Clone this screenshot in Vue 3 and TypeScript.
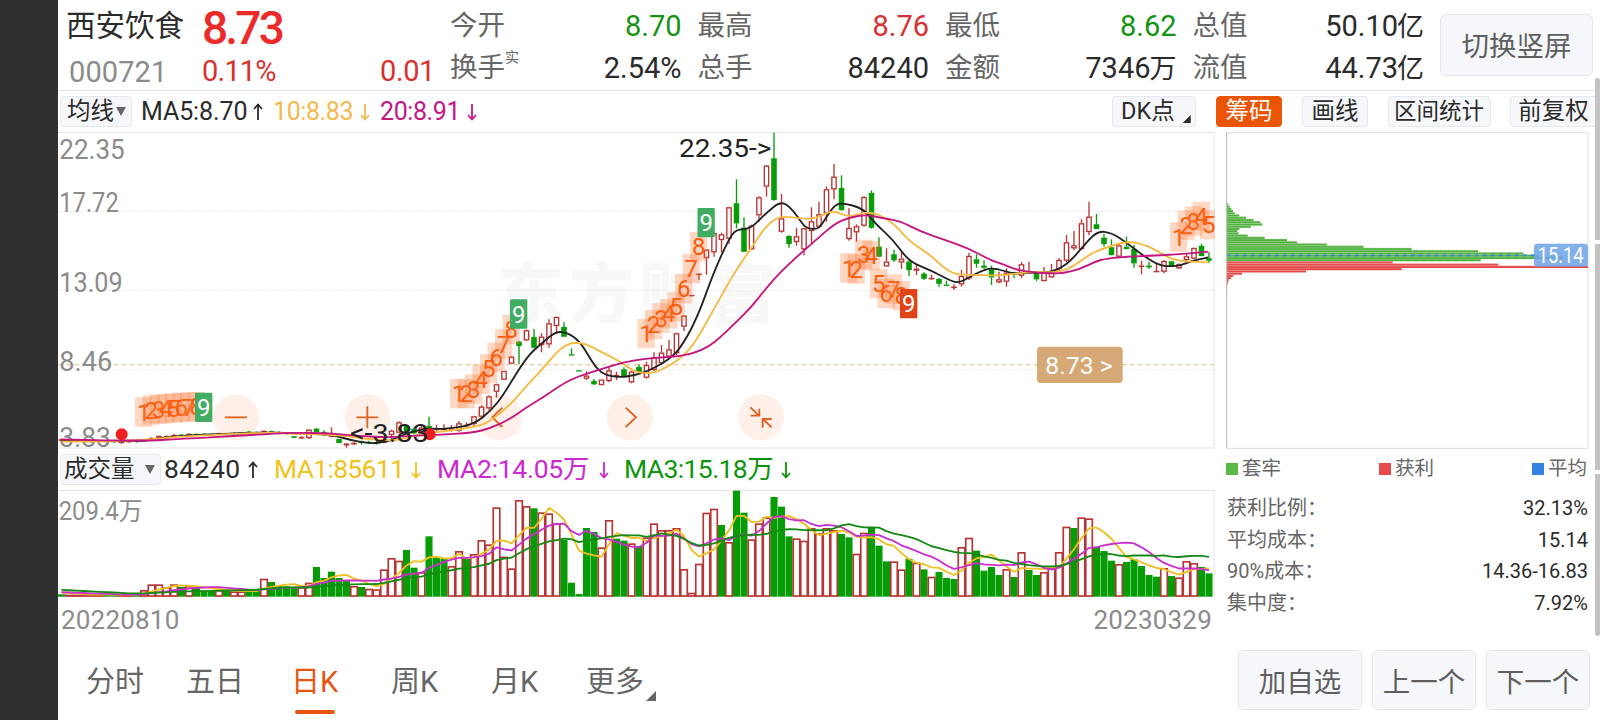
<template>
  <div class="screen">
    <div class="rail"></div>
    <main class="page">
      <header class="head">
        <div class="quote">
          <div class="quote-top">
            <span class="name">西安饮食</span>
            <span class="price">8.73</span>
          </div>
          <div class="quote-sub">
            <span class="code">000721</span>
            <span class="up">0.11%</span>
            <span class="up diff">0.01</span>
          </div>
        </div>
        <div class="stats">
          <div v-for="s in stats" :key="s.label" class="stat">
            <span class="stat-label">{{ s.label }}<sup v-if="s.sup">{{ s.sup }}</sup></span>
            <span :class="s.tone">{{ s.value }}<span v-if="s.unit" class="unit">{{ s.unit }}</span></span>
          </div>
        </div>
        <button class="btn rotate">切换竖屏</button>
      </header>

      <div class="body">
        <section class="left">
          <div class="bar">
            <button class="chip drop">均线<i class="tri"></i></button>
            <span v-for="m in priceMa" :key="m.text" class="ma" :class="m.cls">
              <span class="ma-text">{{ m.text }}</span>
              <svg class="arrow" viewBox="0 0 10 18"><path :d="m.up ? UP : DOWN" /></svg>
            </span>
            <button class="chip dk">DK点<i class="corner"></i></button>
          </div>

          <svg class="kline" viewBox="24 36 3471 951">
            <text class="mark" x="1345" y="590" textLength="830">东方财富</text>
            <g class="grid">
              <line v-for="y in [274, 511, 748]" :key="y" x1="24" x2="3493" :y1="y" :y2="y" />
            </g>
            <path class="frame" d="M24 37.5H3492V984H24" />
            <line class="now" x1="24" x2="3493" y1="734" y2="734" />
            <g class="axis">
              <text v-for="a in axis" :key="a.t" x="28" :y="a.y" :textLength="a.w" lengthAdjust="spacingAndGlyphs">{{ a.t }}</text>
            </g>
            <g v-for="b in tools" :key="b.x" class="tool">
              <circle :cx="b.x" cy="892" r="69" />
              <path :d="b.d" :transform="`translate(${b.x} 892)`" />
            </g>
            <g v-for="(c, i) in candles" :key="i" :class="c[0] ? 'k-up' : 'k-down'">
              <line :x1="cx(i)" :x2="cx(i)" :y1="c[3]" :y2="c[1]" />
              <line :x1="cx(i)" :x2="cx(i)" :y1="c[2]" :y2="c[4]" />
              <rect :x="cx(i) - 6.5" :y="c[1] + 1.5" width="13" :height="Math.max(c[2] - c[1] - 3, 0.5)" />
            </g>
            <g v-for="n in nine" :key="n.i" :class="['seq', n.kind]">
              <rect :x="cx(n.i) - 27" :y="n.y" width="52" height="88" :rx="n.kind ? 4 : 2" />
              <text :x="cx(n.i) - 1" :y="n.y + 70">{{ n.n }}</text>
            </g>
            <path class="l-black" :d="smooth(black)" />
            <path class="l-yellow" :d="smooth(yellow)" />
            <path class="l-pink" :d="smooth(pink)" />
            <circle class="dot" cx="215" cy="943" r="18" />
            <circle class="dot" cx="1139" cy="943" r="18" />
            <text class="peak" x="1887" y="111" textLength="277" lengthAdjust="spacingAndGlyphs">22.35-&gt;</text>
            <text class="peak" x="900" y="967" textLength="236" lengthAdjust="spacingAndGlyphs">&lt;-3.83</text>
            <rect class="tag" x="2961" y="680" width="257" height="109" rx="11" />
            <text class="tag-text" x="2986" y="761" textLength="202">8.73 &gt;</text>
          </svg>

          <div class="bar vol-bar">
            <button class="chip drop vol-drop">成交量<i class="tri"></i></button>
            <span v-for="m in volMa" :key="m.text" class="ma" :class="m.cls">
              <span class="ma-text">{{ m.text }}</span>
              <svg class="arrow" viewBox="0 0 10 18"><path :d="m.up ? UP : DOWN" /></svg>
            </span>
          </div>

          <svg class="volume" viewBox="24 120 3471 321">
            <path class="frame" d="M24 121.5H3492V438H24" />
            <text class="vol-max" x="26" y="211" textLength="252" lengthAdjust="spacingAndGlyphs">209.4万</text>
            <g v-for="(v, i) in volumes" :key="i" :class="v[0] ? 'v-up' : 'v-down'">
              <rect v-if="v[0]" :x="cx(i) - 9.7" :y="v[1] + 2.5" width="19.6" :height="435.5 - v[1]" />
              <rect v-else :x="cx(i) - 10.6" :y="v[1]" width="21.2" :height="440 - v[1]" />
            </g>
            <polyline class="l-gold" :points="average(5)" />
            <polyline class="l-violet" :points="average(10)" />
            <polyline class="l-green" :points="average(20)" />
          </svg>
          <div class="dates"><span>20220810</span><span>20230329</span></div>
        </section>

        <aside class="right">
          <div class="bar modes">
            <button class="chip on">筹码</button>
            <button class="chip">画线</button>
            <button class="chip wide">区间统计</button>
            <button class="chip last">前复权</button>
          </div>
          <svg class="chips" viewBox="48 36 1089 951">
            <rect class="chips-frame" x="50" y="38" width="1084" height="947" />
            <rect
              v-for="(w, i) in costs"
              :key="i"
              :class="i < 27 ? 'c-green' : 'c-red'"
              x="50"
              :y="243 + i * 6.7"
              :width="w - 50"
              height="6.7"
            />
            <line
              v-for="(w, i) in costs"
              :key="'s' + i"
              class="shine"
              x1="50"
              :x2="w"
              :y1="243.6 + i * 6.7"
              :y2="243.6 + i * 6.7"
            />
            <line class="avg" x1="50" x2="985" y1="406" y2="406" />
            <line class="edge" x1="50" x2="50" y1="38" y2="985" />
            <rect class="avg-tag" x="972" y="371" width="162" height="69" rx="10" />
            <text class="avg-text" x="983" y="430" textLength="138" lengthAdjust="spacingAndGlyphs">15.14</text>
          </svg>
          <div class="legend">
            <span><i class="sq green"></i>套牢</span>
            <span><i class="sq red"></i>获利</span>
            <span><i class="sq blue"></i>平均</span>
          </div>
          <dl class="costs">
            <div v-for="r in costRows" :key="r[0]">
              <dt>{{ r[0] }}</dt>
              <dd>{{ r[1] }}</dd>
            </div>
          </dl>
        </aside>
      </div>

      <footer class="foot">
        <nav class="tabs">
          <a v-for="t in tabs" :key="t" :class="{ active: t === current }" @click="current = t">{{ t }}<i v-if="t === '更多'" class="more"></i></a>
        </nav>
        <button class="btn add">加自选</button>
        <button class="btn">上一个</button>
        <button class="btn">下一个</button>
      </footer>
    </main>
    <div class="scroll"><i></i><i></i><i></i></div>
  </div>
</template>

<script setup lang="ts">
import { ref } from 'vue'

type Candle = [number, number, number, number, number]
type Point = [number, number]

const UP = 'M5 17V1.5M1 6L5 1.5L9 6'
const DOWN = 'M5 1V16.5M1 12L5 16.5L9 12'

const current = ref('日K')
const tabs = ['分时', '五日', '日K', '周K', '月K', '更多']

const stats = [
  { label: '今开', value: '8.70', tone: 'down' },
  { label: '最高', value: '8.76', tone: 'up' },
  { label: '最低', value: '8.62', tone: 'down' },
  { label: '总值', value: '50.10', unit: '亿', tone: '' },
  { label: '换手', sup: '实', value: '2.54%', tone: '' },
  { label: '总手', value: '84240', tone: '' },
  { label: '金额', value: '7346', unit: '万', tone: '' },
  { label: '流值', value: '44.73', unit: '亿', tone: '' },
]

const priceMa = [
  { text: 'MA5:8.70', up: true, cls: 'p5' },
  { text: '10:8.83', up: false, cls: 'p10' },
  { text: '20:8.91', up: false, cls: 'p20' },
]
const volMa = [
  { text: '84240', up: true, cls: 'v0' },
  { text: 'MA1:85611', up: false, cls: 'v1' },
  { text: 'MA2:14.05万', up: false, cls: 'v2' },
  { text: 'MA3:15.18万', up: false, cls: 'v3' },
]

const axis = [
  { t: '22.35', y: 116, w: 196 },
  { t: '17.72', y: 277, w: 178 },
  { t: '13.09', y: 517, w: 190 },
  { t: '8.46', y: 752, w: 159 },
  { t: '3.83', y: 982, w: 155 },
]

const costRows = [
  ['获利比例：', '32.13%'],
  ['平均成本：', '15.14'],
  ['90%成本：', '14.36-16.83'],
  ['集中度：', '7.92%'],
]

const cx = (i: number) => 34.5 + 22.5 * i

// [up, body top, body bottom, high, low]
const candles: Candle[] = [
  [1, 958, 962, 955, 966], [0, 960, 963, 957, 966], [1, 961, 964, 958, 967], [1, 961, 964, 959, 967], [0, 962, 965, 960, 968],
  [1, 961, 965, 960, 967], [0, 962, 966, 960, 968], [0, 963, 966, 960, 968], [1, 964, 969, 960, 971], [1, 963, 966, 960, 968],
  [0, 962, 966, 961, 968], [1, 959, 963, 957, 965], [1, 954, 958, 952, 960], [1, 948, 956, 947, 958], [1, 949, 953, 946, 956],
  [1, 945, 949, 942, 952], [0, 944, 948, 942, 950], [1, 942, 946, 940, 948], [0, 942, 946, 940, 948], [0, 942, 945, 940, 947],
  [0, 942, 945, 940, 947], [1, 940, 944, 938, 946], [0, 941, 945, 939, 947], [0, 939, 943, 937, 945], [1, 938, 941, 936, 944],
  [0, 935, 939, 932, 944], [1, 937, 940, 935, 943], [1, 933, 938, 931, 941], [0, 934, 938, 932, 941], [0, 936, 940, 934, 943],
  [0, 938, 942, 936, 944], [0, 949, 953, 947, 955], [1, 951, 955, 949, 957], [1, 929, 954, 928, 957], [0, 926, 937, 924, 938],
  [0, 936, 940, 931, 949], [1, 947, 950, 922, 952], [0, 957, 969, 957, 969], [1, 971, 976, 969, 983], [1, 969, 973, 966, 975],
  [0, 965, 969, 962, 974], [0, 966, 970, 962, 973], [0, 967, 970, 963, 974], [1, 957, 968, 955, 970], [1, 932, 945, 929, 958],
  [1, 907, 938, 904, 940], [0, 918, 938, 915, 941], [0, 927, 940, 922, 943], [1, 923, 936, 918, 940], [0, 918, 926, 890, 928],
  [1, 925, 928, 914, 937], [1, 926, 929, 913, 935], [1, 927, 930, 915, 935], [1, 910, 932, 903, 935], [1, 915, 919, 907, 926],
  [1, 889, 912, 887, 918], [1, 860, 890, 856, 894], [1, 829, 865, 826, 870], [1, 793, 815, 791, 833], [1, 753, 779, 753, 779],
  [1, 710, 731, 708, 731], [0, 665, 678, 662, 733], [1, 631, 661, 628, 663], [0, 651, 683, 627, 685], [1, 650, 675, 640, 697],
  [1, 610, 673, 598, 683], [1, 591, 618, 590, 641], [0, 621, 650, 607, 650], [0, 703, 705, 685, 705], [0, 751, 754, 751, 754],
  [1, 767, 776, 754, 780], [0, 783, 793, 777, 795], [1, 779, 795, 779, 796], [1, 751, 783, 740, 786], [1, 765, 768, 755, 780],
  [0, 748, 770, 742, 772], [1, 755, 787, 752, 790], [0, 741, 756, 733, 760], [1, 735, 773, 725, 776], [1, 712, 750, 697, 753],
  [1, 698, 730, 675, 735], [1, 688, 710, 660, 712], [1, 640, 700, 638, 705], [1, 587, 620, 585, 633], [1, 525, 528, 525, 528],
  [1, 461, 464, 461, 480], [1, 389, 414, 387, 464], [1, 339, 397, 337, 410], [1, 343, 360, 338, 397], [1, 262, 356, 260, 372],
  [0, 250, 310, 178, 325], [0, 323, 395, 292, 396], [1, 317, 388, 314, 390], [1, 232, 286, 229, 305], [1, 137, 200, 135, 230],
  [0, 115, 240, 38, 242], [1, 295, 335, 222, 338], [0, 348, 372, 346, 383], [1, 349, 366, 323, 377], [1, 325, 388, 323, 406],
  [1, 304, 333, 262, 370], [1, 283, 320, 245, 325], [1, 208, 280, 199, 305], [1, 170, 208, 132, 238], [0, 204, 270, 166, 272],
  [1, 324, 357, 265, 362], [1, 319, 337, 313, 365], [1, 231, 317, 229, 320], [0, 219, 323, 211, 326], [0, 380, 410, 352, 411],
  [1, 425, 439, 385, 440], [0, 403, 421, 389, 426], [1, 416, 427, 393, 447], [0, 425, 450, 420, 468], [1, 446, 452, 435, 465],
  [0, 461, 476, 457, 480], [1, 474, 477, 464, 479], [0, 477, 491, 474, 500], [0, 494, 496, 482, 496], [1, 500, 504, 493, 510],
  [1, 468, 493, 450, 500], [1, 408, 475, 399, 480], [0, 418, 431, 403, 443], [0, 437, 443, 421, 447], [0, 448, 472, 437, 495],
  [1, 478, 487, 455, 490], [1, 458, 485, 445, 500], [0, 461, 464, 455, 474], [1, 433, 467, 426, 474], [1, 454, 458, 425, 460],
  [0, 458, 478, 456, 483], [1, 457, 483, 441, 484], [1, 457, 472, 432, 474], [1, 420, 447, 415, 452], [1, 367, 422, 345, 427],
  [1, 376, 385, 333, 391], [1, 310, 387, 298, 390], [1, 290, 336, 245, 346], [0, 313, 327, 282, 327], [0, 353, 372, 342, 380],
  [0, 382, 405, 358, 406], [1, 376, 410, 374, 412], [0, 380, 387, 350, 388], [0, 387, 430, 375, 443], [1, 437, 440, 422, 463],
  [0, 437, 442, 425, 447], [1, 453, 456, 430, 456], [1, 423, 455, 420, 460], [0, 424, 440, 423, 440], [1, 433, 445, 430, 447],
  [1, 409, 420, 400, 430], [1, 384, 416, 383, 418], [0, 378, 408, 371, 408], [0, 415, 422, 397, 428],
]

const black: Point[] = [
  [35, 960], [250, 966], [320, 957], [380, 948], [460, 944], [545, 941], [640, 937], [710, 939], [800, 942], [850, 945],
  [900, 960], [955, 970], [1000, 968], [1035, 956], [1070, 940], [1110, 930], [1140, 925], [1180, 928], [1270, 915], [1325, 870],
  [1360, 825], [1430, 710], [1475, 670], [1520, 632], [1562, 642], [1595, 672], [1630, 732], [1655, 760], [1685, 769], [1722, 772],
  [1785, 758], [1860, 718], [1900, 672], [1945, 585], [1990, 460], [2035, 360], [2058, 328], [2102, 327], [2147, 280], [2193, 243],
  [2225, 265], [2260, 315], [2272, 325], [2300, 328], [2315, 315], [2350, 258], [2375, 248], [2440, 265], [2475, 310], [2530, 360],
  [2577, 425], [2645, 452], [2710, 487], [2734, 486], [2760, 470], [2805, 448], [2835, 444], [2890, 462], [2940, 457], [3000, 458],
  [3050, 435], [3095, 385], [3140, 333], [3185, 338], [3230, 368], [3270, 400], [3320, 433], [3350, 439], [3390, 438], [3420, 424],
  [3475, 412],
]
const yellow: Point[] = [
  [35, 965], [250, 964], [380, 950], [540, 942], [640, 938], [720, 940], [840, 944], [900, 950], [960, 958], [1040, 962],
  [1080, 950], [1150, 937], [1270, 923], [1320, 905], [1380, 855], [1430, 797], [1475, 750], [1530, 685], [1570, 666], [1610, 672],
  [1655, 697], [1700, 718], [1750, 753], [1785, 761], [1830, 754], [1900, 710], [1940, 660], [1990, 570], [2055, 455], [2105, 382],
  [2150, 315], [2190, 288], [2250, 295], [2280, 297], [2310, 290], [2348, 270], [2395, 292], [2430, 280], [2465, 277], [2500, 290],
  [2535, 315], [2580, 365], [2645, 408], [2680, 443], [2715, 463], [2770, 465], [2860, 467], [2940, 455], [3000, 457], [3030, 455],
  [3070, 440], [3115, 405], [3160, 385], [3235, 362], [3295, 378], [3330, 398], [3375, 423], [3475, 427],
]
const pink: Point[] = [
  [35, 958], [270, 964], [400, 956], [560, 948], [720, 938], [845, 940], [900, 946], [1020, 953], [1080, 947], [1155, 945],
  [1270, 938], [1320, 925], [1375, 900], [1430, 862], [1480, 832], [1540, 790], [1590, 767], [1655, 747], [1720, 727], [1780, 717],
  [1840, 712], [1900, 707], [1940, 696], [1975, 680], [2010, 653], [2060, 605], [2105, 560], [2150, 503], [2195, 452], [2250, 402],
  [2300, 358], [2355, 310], [2400, 292], [2450, 284], [2500, 295], [2550, 303], [2610, 334], [2680, 358], [2760, 387], [2820, 420],
  [2860, 433], [2900, 450], [2950, 457], [3000, 460], [3040, 460], [3090, 447], [3135, 425], [3170, 415], [3250, 409], [3380, 404],
  [3475, 395],
]

function smooth(p: Point[]) {
  let d = `M${p[0][0]} ${p[0][1]}`
  for (let i = 1; i < p.length - 1; i++) {
    d += `Q${p[i][0]} ${p[i][1]} ${(p[i][0] + p[i + 1][0]) / 2} ${(p[i][1] + p[i + 1][1]) / 2}`
  }
  return d + `L${p[p.length - 1].join(' ')}`
}

// nine-turn counters: first candle index, tops of the boxes, colour of the closing 9
const runs: { from: number; tops: number[]; end: string }[] = [
  { from: 11, tops: [832, 826, 823, 822, 820, 818, 817, 816, 818], end: 'green' },
  { from: 53, tops: [777, 777, 763, 734, 702, 668, 628, 585, 538], end: 'green' },
  { from: 78, tops: [597, 570, 550, 537, 516, 462, 402, 336, 264], end: 'green' },
  { from: 105, tops: [400, 403, 359, 363, 447, 476, 463, 483, 507], end: 'red' },
  { from: 149, tops: [307, 271, 259, 245, 270], end: '' },
]
const nine = runs.flatMap(r => r.tops.map((y, k) => ({ i: r.from + k, n: k + 1, y, kind: k === 8 ? r.end : '' })))

const tools = [
  { x: 558, d: 'M-33 0H33' },
  { x: 952, d: 'M-33 0H33M0 -33V33' },
  { x: 1348, d: 'M9 -29L-21 0L9 29' },
  { x: 1740, d: 'M-13 -29L18 0L-13 29' },
  { x: 2133, d: 'M-32 -30L-6 -5M-5 -26V-5H-31M32 30L6 5M5 31V5H32' },
]

// [up, bar top]
const volumes: Point[] = [
  [0, 433], [1, 434], [1, 434], [1, 434], [1, 434], [1, 434], [0, 434], [0, 434], [1, 434], [1, 434],
  [0, 432], [1, 420], [1, 403], [1, 403], [1, 411], [1, 403], [0, 411], [1, 408], [0, 413], [0, 422],
  [0, 422], [1, 420], [0, 422], [1, 424], [1, 424], [0, 424], [0, 422], [1, 386], [0, 396], [0, 407],
  [0, 409], [0, 415], [1, 411], [1, 398], [0, 351], [0, 384], [0, 365], [0, 384], [0, 390], [1, 408],
  [0, 411], [1, 416], [1, 418], [1, 358], [1, 324], [1, 332], [0, 300], [0, 353], [1, 366], [0, 259],
  [0, 323], [0, 326], [1, 348], [1, 303], [0, 325], [1, 312], [1, 270], [1, 283], [1, 172], [1, 320],
  [1, 355], [1, 150], [1, 168], [0, 175], [1, 187], [1, 190], [1, 220], [0, 270], [0, 398], [0, 432],
  [0, 234], [0, 246], [1, 292], [1, 210], [0, 266], [0, 272], [1, 280], [0, 288], [1, 262], [1, 220],
  [1, 240], [1, 240], [1, 234], [1, 357], [1, 428], [1, 341], [1, 188], [1, 176], [0, 225], [1, 276],
  [0, 122], [0, 188], [1, 268], [1, 220], [1, 202], [0, 141], [0, 170], [0, 259], [1, 265], [1, 272],
  [1, 234], [1, 250], [1, 234], [1, 240], [0, 252], [0, 262], [1, 311], [1, 248], [0, 234], [0, 287],
  [0, 334], [1, 334], [1, 358], [0, 326], [1, 338], [0, 358], [1, 380], [0, 366], [0, 384], [0, 387],
  [1, 291], [1, 263], [0, 302], [0, 362], [0, 351], [0, 375], [1, 357], [0, 381], [1, 306], [0, 360],
  [0, 375], [1, 366], [1, 352], [1, 306], [1, 230], [0, 234], [1, 202], [1, 205], [0, 290], [0, 303],
  [0, 332], [1, 342], [0, 336], [0, 328], [0, 348], [0, 375], [0, 380], [1, 354], [0, 378], [1, 382],
  [1, 333], [1, 339], [0, 351], [0, 370],
]
const history = [...Array(10).fill(411), ...Array(10).fill(426), ...volumes.map(v => v[1])]

function average(n: number) {
  return volumes
    .map((_, i) => {
      const part = history.slice(i + 21 - n, i + 21)
      return `${cx(i)},${(part.reduce((a, b) => a + b, 0) / n).toFixed(1)}`
    })
    .join(' ')
}

const costs = [
  51, 55, 59, 64, 69, 74, 88, 108, 131, 151, 157, 123, 88, 82, 86, 113, 164, 231, 261, 351, 461, 605, 804, 940, 985, 1059, 812,
  548, 865, 1134, 575, 288, 96, 70, 63, 56, 54, 52, 51, 51,
]
</script>

<style>
body { background: #fff; overflow: hidden; }
</style>

<style scoped>
.screen {
  position: relative;
  display: flex;
  width: 1600px;
  height: 720px;
  overflow: hidden;
  background: #fff;
  color: #2b2b2b;
  font-family: Roboto, "Noto Sans CJK SC", sans-serif;
}
.rail { width: 58px; flex: none; background: #303030; }
.page { width: 1542px; flex: none; display: flex; flex-direction: column; }
button { font-family: inherit; margin: 0; padding: 0; }

.head {
  box-sizing: border-box;
  height: 91px;
  border-bottom: 1px solid #e4e4e4;
  display: flex;
}
.quote { width: 391px; padding-left: 8px; box-sizing: border-box; }
.quote-top { display: flex; height: 55px; line-height: 53px; }
.name { width: 136px; font-size: 29.5px; }
.price { font-size: 46px; font-weight: 500; letter-spacing: -2.8px; color: #ec2a2a; line-height: 56px; }
.quote-sub { display: flex; line-height: 32px; font-size: 29px; }
.code { width: 133px; padding-left: 3px; color: #8b8b8b; letter-spacing: 0.1px; padding-top: 1px; }
.quote-sub .up { letter-spacing: -0.8px; }
.quote-sub .diff { margin-left: auto; margin-right: 14px; letter-spacing: -0.4px; }
.up { color: #d93030; }
.down { color: #149414; }
.stats {
  display: grid;
  grid-template-columns: repeat(4, 232.5px);
  grid-auto-rows: 42px;
  column-gap: 15px;
  padding-top: 5px;
}
.stat { display: flex; justify-content: space-between; line-height: 42px; font-size: 29px; white-space: nowrap; }
.stat-label { font-size: 27.5px; color: #666; padding-left: 1px; }
.stat-label sup { font-size: 14px; line-height: 0; vertical-align: 15px; }
.unit { font-size: 27px; margin-left: -1px; }
.btn {
  box-sizing: border-box;
  width: 104px;
  height: 60px;
  border: 1px solid #e4e6ea;
  border-radius: 6px;
  background: #f6f7fa;
  color: #5f5f5f;
  font-size: 27.5px;
}
.rotate { width: 153px; height: 62px; margin: 14px 0 0 16px; padding-bottom: 2px; }

.body { display: flex; height: 551px; }
.left { width: 1157px; }
.right { width: 370px; margin-left: 11px; }
.bar { display: flex; align-items: center; height: 41px; position: relative; }
.chip {
  box-sizing: border-box;
  height: 31px;
  border: 1px solid #e6e8ec;
  border-radius: 4px;
  background: #f6f7fa;
  color: #2b2b2b;
  font-size: 23.5px;
  line-height: 29px;
  white-space: nowrap;
}
.drop { width: 72px; margin-left: 2px; display: flex; align-items: center; padding-left: 6px; }
.vol-drop { width: 101px; padding-left: 3px; justify-content: space-between; padding-right: 5px; }
.tri { border: 5px solid transparent; border-top: 9px solid #666; border-bottom: 0; margin-left: 2px; }
.ma { display: flex; align-items: center; white-space: nowrap; }
.ma-text { font-size: 25px; letter-spacing: -0.1px; flex: none; }
.arrow { width: 10px; height: 18px; fill: none; stroke: currentColor; stroke-width: 1.8; }
.p5 { margin-left: 9px; width: 132px; }
.p5 .ma-text { width: 112px; }
.p10 { color: #f3b94e; width: 107px; }
.p10 .ma-text { width: 87px; letter-spacing: -0.4px; }
.p20 { color: #c51585; width: 100px; }
.p20 .ma-text { width: 87px; letter-spacing: -0.4px; }
.dk { margin-left: auto; margin-right: 19px; width: 84px; display: flex; padding-left: 8px; }
.corner {
  width: 8px;
  height: 8px;
  background: #2b2b2b;
  clip-path: polygon(100% 0, 100% 100%, 0 100%);
  margin: 18px 0 0 8px;
}

.kline { display: block; width: 1157px; height: 317px; }
.frame { fill: none; stroke: #e5e5e5; stroke-width: 3; }
.mark { font: 900 196px "Noto Sans CJK SC", sans-serif; fill: #f8f8f8; }
.grid line { stroke: #ebebeb; stroke-width: 2.5; stroke-dasharray: 12 4; }
.now { stroke: #ecca9c; stroke-width: 4; stroke-dasharray: 14 10; }
.axis text { font-size: 83px; fill: #8b8b8b; }
.k-up line { stroke: #b93434; stroke-width: 4; }
.k-up rect { fill: #fff; stroke: #b93434; stroke-width: 4; }
.k-down line { stroke: #069c06; stroke-width: 4; }
.k-down rect { fill: #069c06; stroke: #069c06; stroke-width: 3.5; }
.seq rect { fill: #ff7a38; fill-opacity: 0.3; }
.seq text { font-size: 72px; fill: #fb5a0a; text-anchor: middle; }
.seq.green rect { fill: #40ad62; fill-opacity: 1; }
.seq.red rect { fill: #df4416; fill-opacity: 1; }
.seq.green text, .seq.red text { fill: #fff; }
.l-black, .l-yellow, .l-pink { fill: none; stroke-width: 5.5; stroke: #222; }
.l-yellow { stroke: #f6b942; }
.l-pink { stroke: #c5157f; }
.dot { fill: #f02020; }
.tool circle { fill: #fef0e8; }
.tool path { fill: none; stroke: #e0601f; stroke-width: 5.5; }
.peak { font-size: 77px; fill: #222; }
.tag { fill: #d5a876; }
.tag-text { font-size: 74px; fill: #fff; }

.vol-bar { height: 41px; }
.vol-bar .ma-text { font-size: 26.5px; line-height: 32px; margin-top: -1px; }
.v0 { margin-left: 3px; width: 110px; }
.v0 .ma-text { width: 84px; letter-spacing: 0.4px; }
.v1 { color: #f1c21c; width: 163px; }
.v1 .ma-text { width: 137px; letter-spacing: -0.7px; }
.v2 { color: #cc27d2; width: 187px; }
.v2 .ma-text { width: 162px; letter-spacing: -0.3px; }
.v3 { color: #0c940c; }
.v3 .ma-text { width: 157px; letter-spacing: -0.6px; }
.volume { display: block; width: 1157px; height: 107px; }
.vol-max { font-size: 76px; fill: #8b8b8b; }
.v-up rect { fill: #fff; stroke: #b93434; stroke-width: 5; }
.v-down rect { fill: #069c06; }
.volume polyline { fill: none; stroke-width: 5.5; stroke-linejoin: round; }
.l-gold { stroke: #eebf1e; }
.l-violet { stroke: #c92fcf; }
.l-green { stroke: #148a14; }
.dates {
  display: flex;
  justify-content: space-between;
  padding: 4px 3px 0 3px;
  color: #8b8b8b;
  font-size: 26px;
  letter-spacing: 0.2px;
  line-height: 38px;
}

.modes .chip { width: 66px; margin-right: 20px; margin-left: 0; flex: none; }
.modes { margin-left: -10px; }
.modes .on { background: #ea5504; border-color: #ea5504; color: #fff; }
.modes .wide { width: 103px; margin-left: -0.5px; margin-right: 19px; font-size: 22.5px; }
.modes .last { width: 96px; padding-right: 8px; margin: 0; }
.chips { display: block; width: 363px; height: 317px; }
.chips-frame { fill: none; stroke: #dedede; stroke-width: 3; }
.c-green { fill: #4fb03c; }
.c-red { fill: #e44848; }
.shine { stroke: #fff; stroke-opacity: 0.3; stroke-width: 2; }
.avg { stroke: #3385e0; stroke-width: 5; stroke-dasharray: 12 12; }
.edge { stroke: #bdbdbd; stroke-width: 3; }
.avg-tag { fill: #6fa4e8; fill-opacity: 0.87; }
.avg-text { font-size: 68px; fill: #fff; }
.legend {
  display: flex;
  justify-content: space-between;
  width: 361px;
  height: 40px;
  line-height: 40px;
  font-size: 19.5px;
  color: #666;
}
.legend span { display: flex; align-items: center; }
.sq { width: 12px; height: 12px; margin-right: 4px; }
.green { background: #5bb947; }
.red { background: #e64a4a; }
.blue { background: #3483e4; }
.costs { margin: 4px 0 0 1px; width: 361px; font-size: 20px; }
.costs div { display: flex; justify-content: space-between; line-height: 31.5px; height: 31.5px; }
.costs dt { color: #666; }
.costs dd { margin: 0; }

.foot { display: flex; padding: 8px 10px 0 0; height: 70px; gap: 10px; }
.foot .btn { padding-bottom: 1px; }
.tabs { flex: 1; display: flex; font-size: 29px; line-height: 64px; color: #666; padding-left: 28px; }
.tabs a { position: relative; width: 100px; margin-right: 0; white-space: nowrap; }
.tabs a:nth-child(2) { width: 105px; }
.tabs a:nth-child(5) { width: 95px; }
.tabs .active { color: #e6560f; }
.active::after {
  content: '';
  position: absolute;
  left: 4px;
  top: 60px;
  width: 40px;
  height: 4px;
  border-radius: 2px;
  background: #e6560f;
}
.more {
  position: absolute;
  left: 60px;
  top: 41px;
  width: 10px;
  height: 10px;
  background: #666;
  clip-path: polygon(100% 0, 100% 100%, 0 100%);
}
.add { width: 124px; }

.scroll {
  position: absolute;
  right: 0;
  top: 78px;
  width: 5px;
  display: flex;
  flex-direction: column;
  gap: 4px;
}
.scroll i { background: #c3c3c3; height: 162px; }
.scroll i:nth-child(2) { height: 226px; }
.scroll i:first-child { border-radius: 3px 3px 0 0; }
.scroll i:last-child { border-radius: 0 0 3px 3px; }
</style>
